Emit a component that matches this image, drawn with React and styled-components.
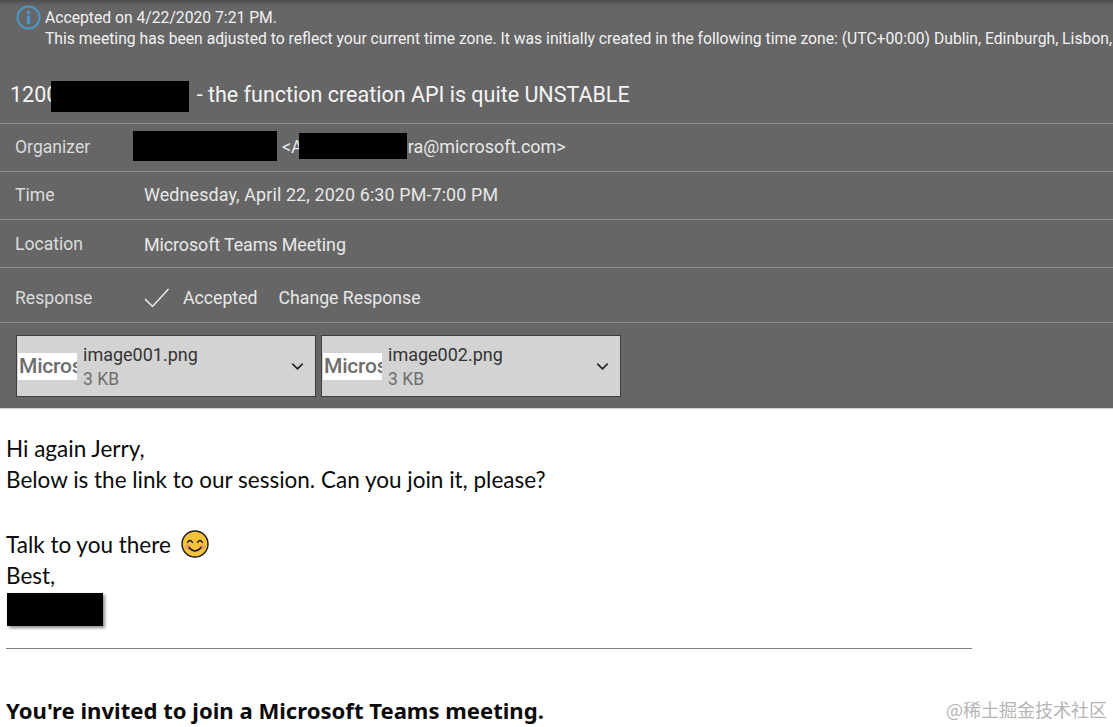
import styled, { createGlobalStyle } from "styled-components";
import { ChevronDown } from "lucide-react";

const GlobalStyle = createGlobalStyle`
    html, body {
        margin: 0;
        padding: 0;
        background: #FFFFFF;
    }
    body {
        font-family: Roboto, "Noto Sans", sans-serif;
    }
`;

const rows = [
    { label: "Time", value: "Wednesday, April 22, 2020 6:30 PM-7:00 PM", height: 48, lift: 2, spacing: 0.12 },
    { label: "Location", value: "Microsoft Teams Meeting", height: 48, lift: -1, spacing: -0.1 },
];

function InfoIcon() {
    return (
        <InfoSvg width="25" height="25" viewBox="0 0 25 25" fill="none">
            <circle cx="12.5" cy="12.5" r="11" stroke="#4C97C6" strokeWidth="2" />
            <circle cx="12.5" cy="7.6" r="1.8" fill="#4C97C6" />
            <rect x="10.8" y="10.5" width="3.4" height="8.5" fill="#4C97C6" />
        </InfoSvg>
    );
}

function Smile() {
    return (
        <svg width="28" height="28" viewBox="0 0 28 28">
            <circle cx="14" cy="14" r="13" fill="#F5C33B" stroke="#1A1A1A" strokeWidth="1.4" />
            <circle cx="7" cy="17" r="2.6" fill="#EE9A6A" />
            <circle cx="21" cy="17" r="2.6" fill="#EE9A6A" />
            <path d="M6.5 12.5 Q9 8.5 11.5 12.5M16.5 12.5 Q19 8.5 21.5 12.5" fill="none" stroke="#1A1A1A" strokeWidth="1.4" strokeLinecap="round" />
            <path d="M8 17.5 Q14 24.5 20 17.5" fill="none" stroke="#1A1A1A" strokeWidth="1.4" strokeLinecap="round" />
        </svg>
    );
}

function Attachment({ name }) {
    return (
        <AttachmentCard>
            <Thumb><ThumbText>Micros</ThumbText></Thumb>
            <FileInfo>
                <FileName>{name}</FileName>
                <FileSize>3 KB</FileSize>
            </FileInfo>
            <ChevronDown size={19} color="#222222" strokeWidth={2} />
        </AttachmentCard>
    );
}

export default function App() {
    return (
        <Page>
            <GlobalStyle />
            <Header>
                <Notice>
                    <InfoIcon />
                    <NoticeText>
                        <NoticeLine>Accepted on 4/22/2020 7:21 PM.</NoticeLine>
                        <NoticeLine>This meeting has been adjusted to reflect your current time zone. It was initially created in the following time zone: (UTC+00:00) Dublin, Edinburgh, Lisbon, London</NoticeLine>
                    </NoticeText>
                </Notice>
                <Title>
                    1200<TitleMask /> - the function creation API is quite UNSTABLE
                </Title>
                <Row $height={48} $lift={2}>
                    <Label>Organizer</Label>
                    <OrganizerValue>
                        <Mask />
                        <span>&lt;A</span>
                        <OrganizerMask />
                        <span>ra@microsoft.com&gt;</span>
                    </OrganizerValue>
                </Row>
                {rows.map((row) => (
                    <Row key={row.label} $height={row.height} $lift={row.lift}>
                        <Label>{row.label}</Label>
                        <Value $spacing={row.spacing}>{row.value}</Value>
                    </Row>
                ))}
                <Row $height={55} $lift={-5}>
                    <Label>Response</Label>
                    <ResponseValue>
                        <svg width="26" height="20" viewBox="0 0 26 20" fill="none">
                            <path d="M1 11 L8.5 18.5 L24.5 1" stroke="#EDEDED" strokeWidth="1.5" />
                        </svg>
                        <ResponseText>Accepted</ResponseText>
                        <ResponseText>Change Response</ResponseText>
                    </ResponseValue>
                </Row>
                <Attachments>
                    <Attachment name="image001.png" />
                    <Attachment name="image002.png" />
                </Attachments>
            </Header>
            <Body>
                <BodyLine>Hi again Jerry,</BodyLine>
                <BodyLine>Below is the link to our session. Can you join it, please?</BodyLine>
                <BodyGap />
                <BodyLine $height={32}>Talk to you there <SmileWrap><Smile /></SmileWrap></BodyLine>
                <BodyLine>Best,</BodyLine>
                <SignatureMask />
                <Divider />
                <Invite>You're invited to join a Microsoft Teams meeting.</Invite>
            </Body>
            <Watermark>@稀土掘金技术社区</Watermark>
        </Page>
    );
}

const Page = styled.div`
    position: relative;
    width: 1113px;
    height: 727px;
    overflow: hidden;
    background: #FFFFFF;
`;
const Header = styled.div`
    height: 409px;
    box-sizing: border-box;
    background: linear-gradient(#4E4E4E 0, #666666 6px);
    color: #F0F0F0;
    border-bottom: 1px solid #CFCFCF;
`;
const Notice = styled.div`
    display: flex;
    gap: 4px;
    height: 70px;
    padding: 5px 0 0 16px;
    box-sizing: border-box;
    white-space: nowrap;
`;
const InfoSvg = styled.svg`
    flex-shrink: 0;
`;
const NoticeText = styled.div`
    display: flex;
    flex-direction: column;
    padding-top: 2px;
`;
const NoticeLine = styled.div`
    font-size: 15.7px;
    line-height: 21px;
    color: #F2F2F2;
`;
const Title = styled.div`
    display: flex;
    align-items: center;
    height: 53px;
    padding: 0 0 5px 10px;
    box-sizing: border-box;
    font-size: 21.5px;
    color: #F5F5F5;
    white-space: pre;
`;
const TitleMask = styled.div`
    flex-shrink: 0;
    width: 138px;
    height: 31px;
    margin: 5px 2px 0 -7px;
    background: #000000;
`;
const Row = styled.div`
    display: flex;
    align-items: center;
    height: ${(props) => props.$height}px;
    box-sizing: border-box;
    border-top: 1px solid #8C8C8C;
    padding-left: 15px;
    padding-bottom: ${(props) => Math.max(props.$lift, 0)}px;
    padding-top: ${(props) => Math.max(-props.$lift, 0)}px;
`;
const Label = styled.div`
    width: 129px;
    flex-shrink: 0;
    font-size: 17.6px;
    color: #DCDCDC;
`;
const Value = styled.div`
    font-size: 17.9px;
    letter-spacing: ${(props) => props.$spacing || 0}px;
    color: #E8E8E8;
`;
const OrganizerValue = styled(Value)`
    display: flex;
    align-items: center;
    margin-left: -11px;
`;
const Mask = styled.div`
    width: 144px;
    height: 30px;
    margin: 0 5px 2px 0;
    background: #000000;
`;
const OrganizerMask = styled.div`
    width: 108px;
    height: 26px;
    margin: 0 1px 2px -4px;
    background: #000000;
`;
const ResponseValue = styled.div`
    display: flex;
    align-items: center;
`;
const ResponseText = styled.span`
    font-size: 17.7px;
    color: #E8E8E8;
    margin-left: 13px;
    margin-right: 8px;
`;
const Attachments = styled.div`
    display: flex;
    gap: 5px;
    padding: 12px 0 0 16px;
    border-top: 1px solid #8C8C8C;
`;
const AttachmentCard = styled.div`
    display: flex;
    align-items: center;
    width: 300px;
    height: 62px;
    box-sizing: border-box;
    padding: 0 8px 0 0;
    background: #D3D3D3;
    border: 1px solid #3F3F3F;
`;
const Thumb = styled.div`
    width: 59px;
    height: 27px;
    margin-left: 1px;
    overflow: hidden;
    background: #FFFFFF;
    flex-shrink: 0;
    display: flex;
    align-items: center;
    padding-left: 1px;
    box-sizing: border-box;
`;
const ThumbText = styled.span`
    font-size: 21px;
    font-weight: 500;
    color: #6E6E6E;
    letter-spacing: -0.2px;
`;
const FileInfo = styled.div`
    display: flex;
    flex-direction: column;
    flex: 1;
    margin-left: 6px;
    padding-top: 2px;
`;
const FileName = styled.div`
    font-size: 18px;
    line-height: 24px;
    color: #333333;
`;
const FileSize = styled.div`
    font-size: 17.5px;
    line-height: 25px;
    color: #6E6E6E;
`;
const Body = styled.div`
    display: flex;
    flex-direction: column;
    padding: 24px 0 0 6px;
    color: #0A0A0A;
    font-family: "Lato", "Liberation Sans", sans-serif;
`;
const BodyLine = styled.div`
    display: flex;
    align-items: center;
    gap: 4px;
    height: ${(props) => props.$height || 31}px;
    font-size: 22.5px;
    white-space: pre;
`;
const BodyGap = styled.div`
    height: 33px;
`;
const SmileWrap = styled.span`
    display: flex;
`;
const SignatureMask = styled.div`
    width: 96px;
    height: 33px;
    margin: 2px 0 0 1px;
    background: #000000;
    box-shadow: 2px 2px 3px rgba(0, 0, 0, 0.45);
`;
const Divider = styled.div`
    width: 966px;
    margin-top: 22px;
    border-top: 1px solid #808080;
`;
const Invite = styled.div`
    margin-top: 46px;
    font-family: "Noto Sans", sans-serif;
    font-size: 22.1px;
    font-weight: 700;
    white-space: nowrap;
`;
const Watermark = styled.div`
    position: absolute;
    right: 6px;
    bottom: 5px;
    font-family: "Noto Sans CJK SC", sans-serif;
    font-size: 18px;
    color: #B5B5B5;
`;
